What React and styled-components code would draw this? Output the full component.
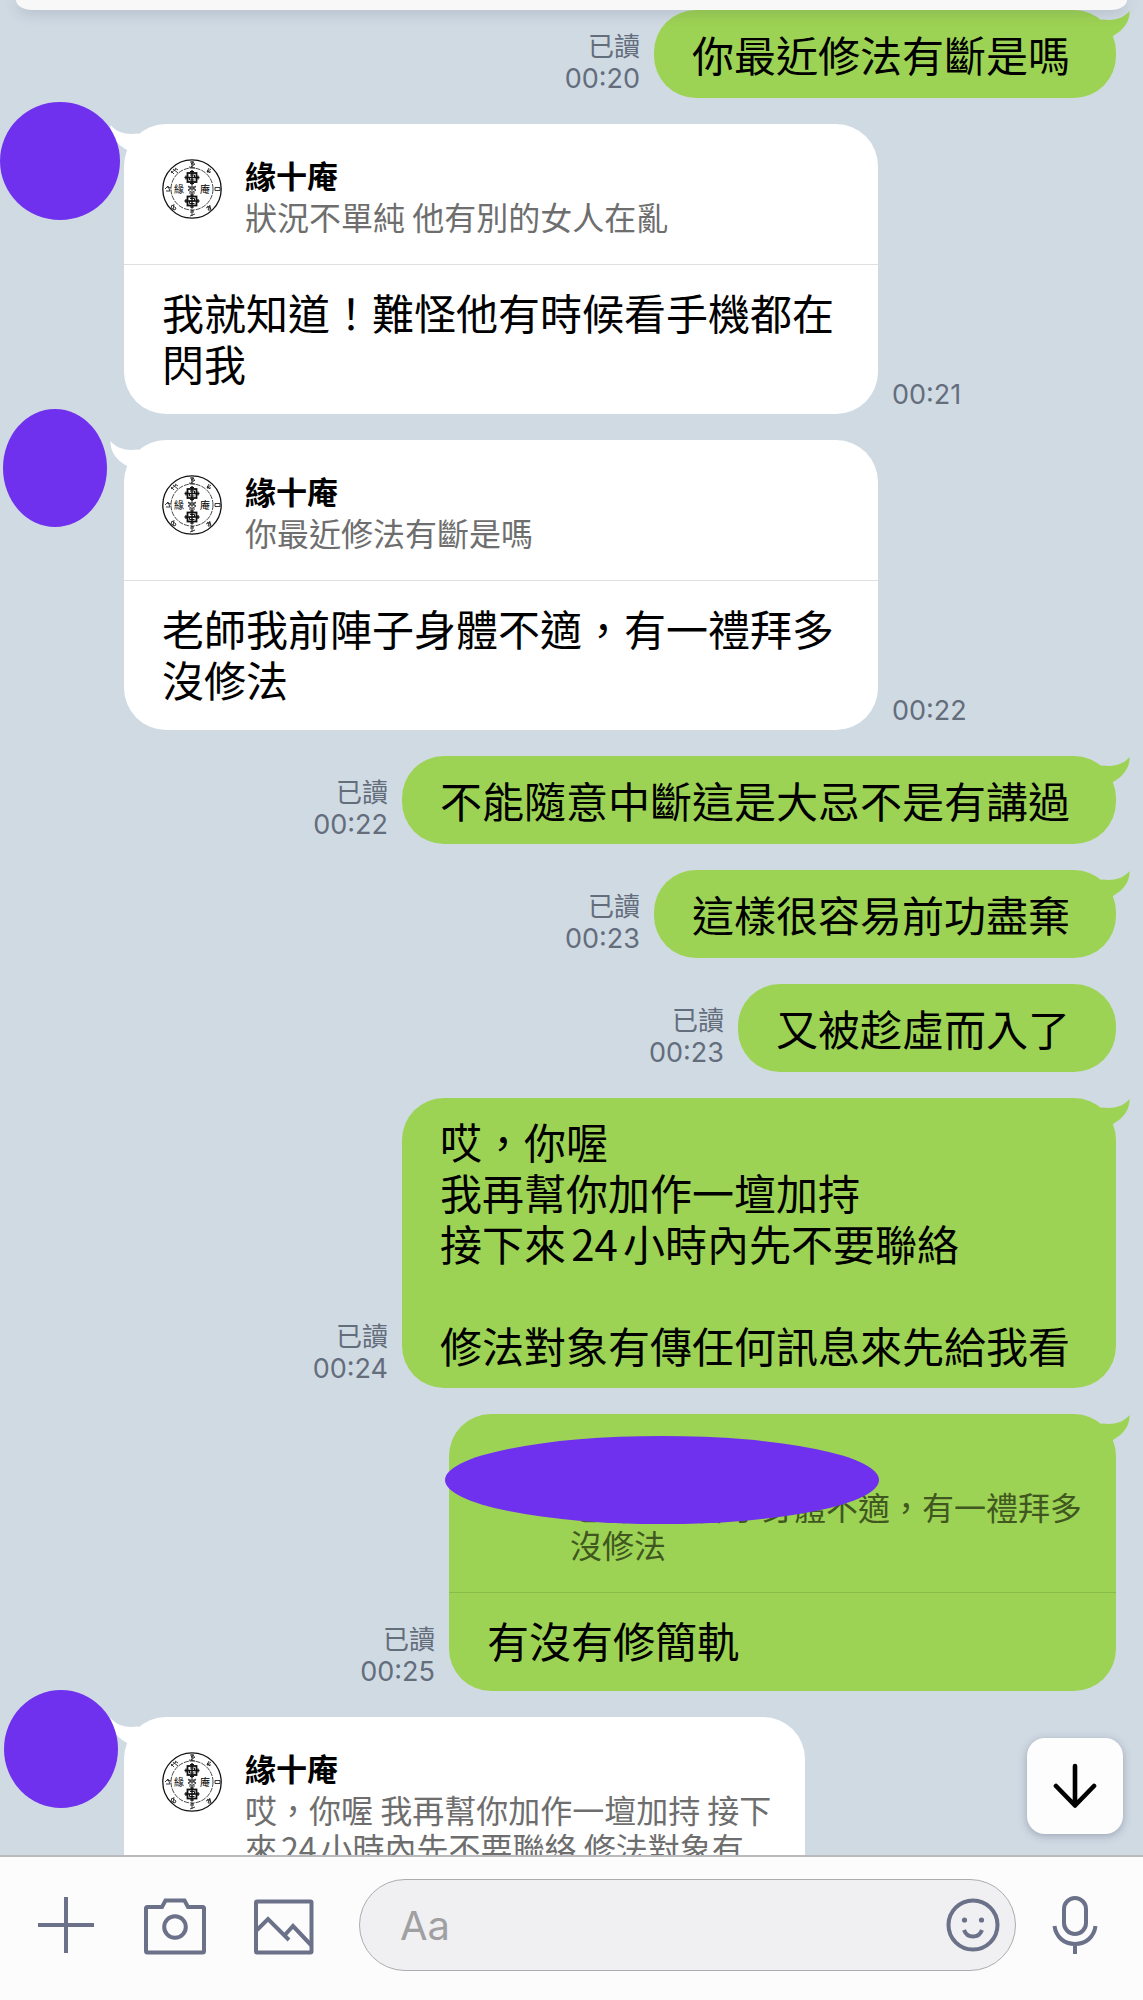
import React from "react";
import styled, { createGlobalStyle } from "styled-components";

const messages = [
  { id: 1, mine: true, tail: true, read: true, time: "00:20", text: "你最近修法有斷是嗎" },
  {
    id: 2,
    tail: true,
    time: "00:21",
    cover: { width: 120, left: 0, top: -22 },
    quote: { name: "緣十庵", text: "狀況不單純 他有別的女人在亂" },
    text: "我就知道！難怪他有時候看手機都在閃我",
  },
  {
    id: 3,
    tail: true,
    time: "00:22",
    cover: { width: 104, left: 3, top: -31 },
    quote: { name: "緣十庵", text: "你最近修法有斷是嗎" },
    text: "老師我前陣子身體不適，有一禮拜多沒修法",
  },
  { id: 4, mine: true, tail: true, read: true, time: "00:22", text: "不能隨意中斷這是大忌不是有講過" },
  { id: 5, mine: true, tail: true, read: true, time: "00:23", text: "這樣很容易前功盡棄" },
  { id: 6, mine: true, read: true, time: "00:23", text: "又被趁虛而入了" },
  {
    id: 7,
    mine: true,
    tail: true,
    read: true,
    time: "00:24",
    text: "哎，你喔\n我再幫你加作一壇加持\n接下來24小時內先不要聯絡\n\n修法對象有傳任何訊息來先給我看",
  },
  {
    id: 8,
    mine: true,
    tail: true,
    read: true,
    time: "00:25",
    quote: { hidden: true, text: "老師我前陣子身體不適，有一禮拜多\n沒修法" },
    text: "有沒有修簡軌",
  },
  {
    id: 9,
    tail: true,
    cover: { width: 114, left: 4, top: -27 },
    quote: { name: "緣十庵", text: "哎，你喔 我再幫你加作一壇加持 接下\n來24小時內先不要聯絡 修法對象有" },
  },
];

export default function App() {
  return (
    <Screen>
      <GlobalStyle />
      <NoticeBar />
      <Messages>
        {messages.map((message) => (
          <Message key={message.id} {...message} />
        ))}
      </Messages>
      <ScrollButton type="button" aria-label="捲到最新訊息">
        <svg width="48" height="48" viewBox="0 0 48 48" fill="none" stroke="#000" strokeWidth="4.6" strokeLinecap="round" strokeLinejoin="round">
          <path d="M24 4V43M5 24L24 43.500L43 24" />
        </svg>
      </ScrollButton>
      <Composer />
    </Screen>
  );
}

function Message({ mine, tail, read, time, cover, quote, text }) {
  return (
    <Row $mine={mine}>
      <Bubble $mine={mine} $card={Boolean(quote)}>
        {tail && <Tail mine={mine} />}
        {quote ? (
          <>
            <Quote $mine={mine}>
              {quote.hidden ? <BlankAvatar /> : <Seal />}
              <QuoteBody>
                <QuoteName>{quote.name}</QuoteName>
                <QuoteText $mine={mine}>{quote.text}</QuoteText>
              </QuoteBody>
              {quote.hidden && <QuoteCover />}
            </Quote>
            <Reply>{text}</Reply>
          </>
        ) : (
          <Text>{text}</Text>
        )}
      </Bubble>
      {time && (
        <Meta $mine={mine}>
          {read && <ReadMark>已讀</ReadMark>}
          <time>{time}</time>
        </Meta>
      )}
      {cover && <AvatarCover $width={cover.width} $left={cover.left} $top={cover.top} />}
    </Row>
  );
}

function Tail({ mine }) {
  return (
    <TailBox $mine={mine} width="30" height="30" viewBox="0 0 30 30">
      <path
        d="M0 10L3 9.500C12 11 23 9 29.500 1C30 11 24 20 13 26L4 26Z"
        transform={mine ? undefined : "translate(30 0) scale(-1 1)"}
      />
    </TailBox>
  );
}

function Ornament({ y }) {
  return (
    <g transform={`translate(30 ${y})`} stroke="#111" fill="none">
      <path d="M0-7.500V7.500M-7.500 0H7.500" strokeWidth="1.400" />
      <rect x="-4.500" y="-4.500" width="9" height="9" strokeWidth="1.800" />
      <path d="M-2 -2.500H2.500V0H-2.500V2.500H2.500" strokeWidth="1" />
      <path d="M-6-2V2M6-2V2M-2-6H2M-2 6H2" strokeWidth="1.200" />
    </g>
  );
}

// Round seal used as the profile picture of the account
function Seal() {
  return (
    <SealBox width="60" height="60" viewBox="0 0 60 60">
      <circle cx="30" cy="30" r="29.200" fill="none" stroke="#111" strokeWidth="1.300" />
      <circle cx="30" cy="30" r="21" fill="none" stroke="#333" strokeWidth="0.900" strokeDasharray="5 1" />
      <Ornament y={18.5} />
      <Ornament y={42} />
      <g fill="none" stroke="#222" strokeWidth="0.900">
        <path d="M26 27l3 2-3 2 3 2M34 27l-3 2 3 2-3 2M27 30h6M30 26v8M27 34h6M26 28h8" />
        <path d="M28 3h4l-3 2h4l-4 3M30 2v6M27 8l6 1" />
        <path d="M28 53h4M30 51v6M28 57l5-2M29 51l3 1" />
        <path d="M3 30l3-3 2 5M4 32h4M5 28l4 1" />
        <path d="M53 28.500h5v3h-5z" />
        <path d="M9 12l3 3M11 10l5 4M9 14l5-4M13 9l3 2" />
        <path d="M45 11l3 3M47 9l-2 4h4M45 13l4-3" />
        <path d="M10 46l4 3-1 2-4-2zM12 45l-1 6" />
        <path d="M45 47l4 3M48 46l-2 5h3M44 49l4-2 1 4" />
      </g>
      <SealText x="17" y="34">緣</SealText>
      <SealText x="43" y="34">庵</SealText>
    </SealBox>
  );
}

function Composer() {
  return (
    <Bar>
      <Tools>
        <IconButton type="button" aria-label="新增">
          <svg width="64" height="64" viewBox="0 0 64 64">
            <path d="M32 4V60M4 32H60" />
          </svg>
        </IconButton>
        <IconButton type="button" aria-label="相機">
          <svg width="64" height="64" viewBox="0 0 64 64">
            <path d="M3 15.500Q3 14 4.500 14H19L22.500 7.500H41.500L45 14H59.500Q61 14 61 15.500V58Q61 59.500 59.500 59.500H4.500Q3 59.500 3 58Z" />
            <circle cx="32" cy="34" r="10.800" />
          </svg>
        </IconButton>
        <IconButton type="button" aria-label="相片">
          <svg width="64" height="64" viewBox="0 0 64 64">
            <rect x="4" y="8.500" width="55.500" height="51" rx="1" />
            <path d="M5 37L16 26L37 47M32 43L41 33L59 52" />
          </svg>
        </IconButton>
      </Tools>
      <Field>
        <Input type="text" placeholder="Aa" aria-label="輸入訊息" />
        <IconButton type="button" aria-label="貼圖">
          <svg width="64" height="64" viewBox="0 0 64 64">
            <circle cx="32" cy="32" r="24.500" />
            <circle cx="23.500" cy="27" r="2.600" className="dot" />
            <circle cx="40.500" cy="27" r="2.600" className="dot" />
            <path d="M23 37Q25.500 43.500 32 43.500T41 37" />
          </svg>
        </IconButton>
      </Field>
      <IconButton type="button" aria-label="語音">
        <svg width="64" height="64" viewBox="0 0 64 64">
          <rect x="21" y="5" width="22" height="36" rx="11" />
          <path d="M11.500 33C13 44 21 51 32 51S51 44 52.500 33M32 51V61" />
        </svg>
      </IconButton>
    </Bar>
  );
}

const GlobalStyle = createGlobalStyle`
  * {
    box-sizing: border-box;
  }
  body {
    margin: 0;
    background: #d0dae3;
    color: #000;
    font-family: "Noto Sans CJK TC", sans-serif;
    text-autospace: normal;
  }
  button {
    padding: 0;
    border: 0;
    background: none;
    cursor: pointer;
  }
`;
const Screen = styled.div`
  position: relative;
  display: flex;
  flex-direction: column;
  height: 100vh;
  overflow: hidden;
`;
const NoticeBar = styled.div`
  position: relative;
  z-index: 2;
  flex: none;
  height: 10px;
  margin: 0 16px;
  border-radius: 0 0 16px 16px / 0 0 10px 10px;
  background: #f8f8f8;
  box-shadow: 0 3px 14px rgba(60, 70, 90, 0.22);
`;
const Messages = styled.main`
  display: flex;
  flex: 1;
  flex-direction: column;
  gap: 26px;
  min-height: 0;
  padding: 0 27px 0 124px;
  overflow: hidden;
`;
const Row = styled.div`
  position: relative;
  display: flex;
  flex: none;
  flex-direction: ${(props) => (props.$mine ? "row-reverse" : "row")};
  align-items: flex-end;
  gap: 14px;
  margin-left: -124px;
  padding-left: 124px;
`;
const Bubble = styled.div`
  position: relative;
  display: flex;
  flex-direction: column;
  justify-content: center;
  min-height: 88px;
  max-width: 754px;
  padding: ${(props) => (props.$card ? "0" : "17px 46px 18px 38px")};
  border-radius: 42px;
  background: ${(props) => (props.$mine ? "#9dd354" : "#fff")};
`;
const TailBox = styled.svg`
  position: absolute;
  top: 0;
  ${(props) => (props.$mine ? "right: -14px;" : "left: -14px;")}
  fill: ${(props) => (props.$mine ? "#9dd354" : "#fff")};
`;
const Text = styled.p`
  margin: 0;
  font-size: 42px;
  line-height: 51px;
  white-space: pre-wrap;
`;
const Reply = styled(Text)`
  padding: 21px 38px 26px;
`;
const Quote = styled.div`
  position: relative;
  display: flex;
  gap: 23px;
  padding: 29px 34px 29px 38px;
  border-bottom: 1px solid ${(props) => (props.$mine ? "#8abb48" : "#dfdfe2")};
`;
const QuoteBody = styled.div`
  min-width: 0;
`;
const QuoteName = styled.div`
  min-height: 44px;
  font-size: 31px;
  font-weight: 700;
  line-height: 44px;
`;
const QuoteText = styled.div`
  color: ${(props) => (props.$mine ? "#40581f" : "#6e6e6e")};
  font-size: 32px;
  line-height: 38px;
  white-space: pre-wrap;
`;
const SealBox = styled.svg`
  flex: none;
  margin-top: 6px;
`;
const SealText = styled.text`
  font-size: 10px;
  text-anchor: middle;
`;
const BlankAvatar = styled.div`
  flex: none;
  width: 60px;
  height: 60px;
  margin-top: 6px;
  border-radius: 50%;
  background: #3a4a3a;
`;
const QuoteCover = styled.div`
  position: absolute;
  top: 22px;
  left: -4px;
  width: 65%;
  height: 88px;
  border-radius: 50%;
  background: #6f31ee;
`;
const AvatarCover = styled.div`
  position: absolute;
  top: ${(props) => props.$top}px;
  left: ${(props) => props.$left}px;
  width: ${(props) => props.$width}px;
  height: 118px;
  border-radius: 50%;
  background: #6f31ee;
`;
const Meta = styled.div`
  display: flex;
  flex-direction: column;
  align-items: ${(props) => (props.$mine ? "flex-end" : "flex-start")};
  padding-bottom: 3px;
  color: #636d7c;
  font-family: Inter, "Noto Sans CJK TC", sans-serif;
  font-size: 27px;
  line-height: 32px;
`;
const ReadMark = styled.span`
  font-size: 26px;
`;
const ScrollButton = styled.button`
  position: absolute;
  right: 20px;
  bottom: 166px;
  display: flex;
  align-items: center;
  justify-content: center;
  width: 96px;
  height: 96px;
  && {
    background: #fdfdfd;
  }
  border-radius: 18px;
  box-shadow: 0 2px 8px rgba(60, 70, 100, 0.35);
`;
const Bar = styled.footer`
  display: flex;
  flex: none;
  align-items: center;
  gap: 27px;
  padding: 22px 36px 29px 34px;
  border-top: 2px solid #b9babd;
  background: #fcfcfc;
`;
const Tools = styled.div`
  display: flex;
  flex: none;
  gap: 45px;
  padding-right: 16px;
`;
const IconButton = styled.button`
  flex: none;
  width: 64px;
  height: 64px;
  svg {
    display: block;
    fill: none;
    stroke: #6a7188;
    stroke-width: 4;
  }
  .dot {
    fill: #6a7188;
    stroke: none;
  }
`;
const Field = styled.div`
  display: flex;
  flex: 1;
  align-items: center;
  min-width: 0;
  height: 92px;
  padding: 0 10px 0 40px;
  border: 1px solid #adadb0;
  border-radius: 46px;
  background: #f0f0f2;
`;
const Input = styled.input`
  flex: 1;
  min-width: 0;
  height: 64px;
  padding: 0;
  border: 0;
  outline: 0;
  background: none;
  font-family: Inter, "Noto Sans CJK TC", sans-serif;
  font-size: 40px;
  &::placeholder {
    color: #a0a0a2;
    opacity: 1;
  }
`;
